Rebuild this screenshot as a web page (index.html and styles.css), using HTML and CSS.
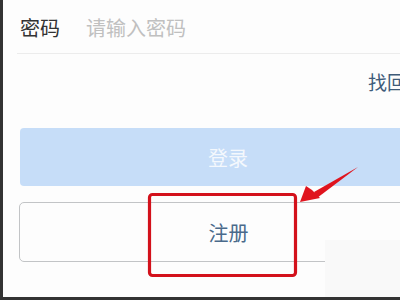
FILE: index.html
```html
<!DOCTYPE html>
<html lang="zh-CN">
<head>
<meta charset="utf-8">
<link rel="stylesheet" href="styles.css">
</head>
<body>
<div class="screen">
  <div class="content">
    <div class="form">
      <div class="field">
        <span class="label">密码</span>
        <span class="placeholder">请输入密码</span>
      </div>
      <div class="links">
        <span class="forgot">找回密码</span>
      </div>
      <div class="btn btn-login">登录</div>
      <div class="btn btn-register">注册</div>
    </div>
    <div class="fade"></div>
    <svg class="annot" width="400" height="300" viewBox="0 0 400 300">
      <rect x="149.5" y="194.5" width="146" height="81" rx="3" fill="none" stroke="#d3111b" stroke-width="3.2"/>
      <path d="M358 167 L314 192 L317 198 Z" fill="#e0141e"/>
      <path d="M300 202 L306 186 L312 190 L320 198 Z" fill="#e0141e"/>
    </svg>
  </div>
</div>
</body>
</html>
```
FILE: styles.css
```css
html, body {
  margin: 0;
  padding: 0;
}
body {
  font-family: "Noto Sans CJK SC", "Noto Sans", sans-serif;
}
.screen {
  width: 400px;
  height: 300px;
  overflow: hidden;
  background: #333333;
  display: flex;
  flex-direction: column;
}
.content {
  flex: none;
  height: 297px;
  margin-left: 3px;
  background: #fdfdfd;
  position: relative;
  overflow: hidden;
}
.form {
  width: 418px;
  margin-left: 17px;
  display: flex;
  flex-direction: column;
}
.field {
  margin-left: -3px;
  padding-left: 3px;
  border-bottom: 1px solid #ececec;
  display: flex;
  align-items: center;
  gap: 26px;
  font-size: 20px;
  line-height: 20px;
  padding-top: 2px;
  box-sizing: border-box;
  height: 54px;
}
.label {
  color: #333333;
}
.placeholder {
  color: #c0c0c0;
}
.links {
  display: flex;
  justify-content: flex-end;
  padding-top: 18px;
  height: 74px;
  box-sizing: border-box;
}
.forgot {
  font-size: 19px;
  line-height: 20px;
  color: #3e5b79;
  white-space: nowrap;
  width: 70px;
}
.btn {
  display: flex;
  align-items: center;
  justify-content: center;
  font-size: 20px;
  box-sizing: border-box;
}
.btn-login {
  height: 58px;
  background: #c6ddf8;
  color: #f4f8fd;
  border-radius: 4px;
  padding-right: 2px;
}
.btn-register {
  margin-top: 16px;
  margin-left: -1px;
  height: 60px;
  border: 1px solid #c2c4c6;
  border-radius: 5px;
  color: #4a6a8b;
  background: #fdfdfd;
}
.fade {
  position: absolute;
  left: 322px;
  top: 240px;
  width: 78px;
  height: 57px;
  background: #f9f9f9;
}
.annot {
  position: absolute;
  left: -3px;
  top: 0;
}
```
